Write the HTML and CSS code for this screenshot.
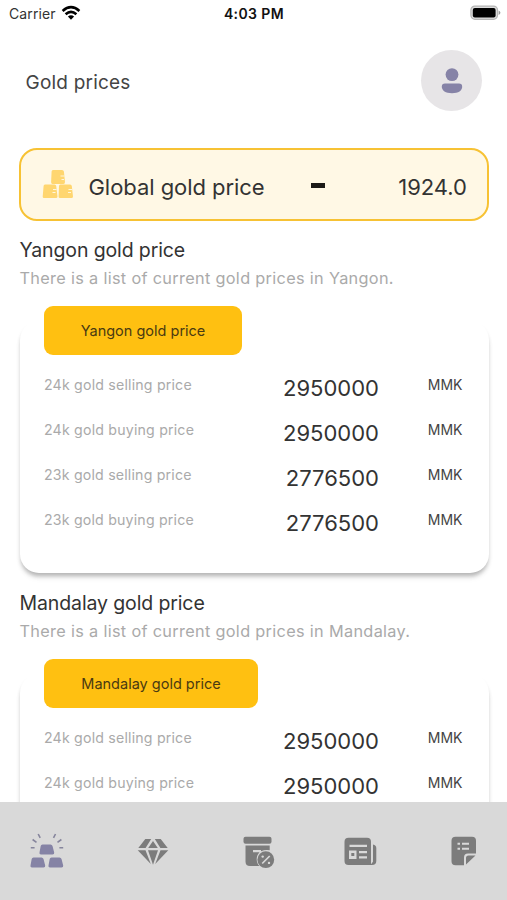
FILE: index.html
```html
<!DOCTYPE html>
<html lang="en">
<head>
<meta charset="utf-8">
<title>Gold prices</title>
<link rel="stylesheet" href="styles.css">
</head>
<body>
<div class="screen">
  <div class="status">
    <div class="carrier"><span>Carrier</span>
      <svg width="20" height="16" viewBox="0 0 20 16"><g fill="none" stroke="#000" stroke-width="2.6"><path d="M1.6 5.900Q10-1.500 18.400 5.900"/><path d="M4.600 9.200Q10 4.400 15.400 9.200"/></g><path d="M6.900 11.500Q10 8.800 13.100 11.500L10 14.800Z"/></svg>
    </div>
    <div class="time">4:03 PM</div>
    <svg class="battery" width="31" height="16" viewBox="0 0 31 16"><rect x=".9" y="1.100" width="26.600" height="13.200" rx="4" fill="#ddd" stroke="#b5b5b5" stroke-width="1.200"/><rect x="2.800" y="3" width="22.800" height="9.400" rx="2"/><path d="M28.600 5.500Q30.400 6.500 30.400 7.700T28.600 10Z" fill="#999"/></svg>
  </div>
  <header class="top">
    <h1>Gold prices</h1>
    <div class="avatar"><svg width="22" height="26" viewBox="0 0 22 26"><circle cx="11" cy="6.600" r="6.400"/><path d="M4 15.600H18Q21.200 15.600 21.200 18.800C21.200 22.500 17.500 25.300 11 25.300S.8 22.500.8 18.800Q.8 15.600 4 15.600Z"/></svg></div>
  </header>
  <div class="global">
    <svg width="32" height="30" viewBox="0 0 32 30"><g fill="#ffd670"><path d="M11 1H20Q21.600 1 21.900 2.500L23 13Q23 15 21.500 15H10.500Q9 15 9.100 13L9.600 2.500Q9.700 1 11 1Z"/><path d="M3 15.500H12.500Q14 15.500 14.200 17L15.500 27.500Q15.500 29 14 29H2Q.6 29 .7 27.500L1.600 17Q1.700 15.500 3 15.500Z"/><path d="M18.300 15.500H28Q29.600 15.500 29.800 17L31 27.500Q31 29 29.500 29H18Q16.500 29 16.600 27.500L17 17Q17.100 15.500 18.300 15.500Z"/></g><path d="M18.500 7H22.500M19.500 10.500H22M11 20.500H14.500M10.500 23.500H13.500M26.500 20.500H30M26 23.500H29" stroke="#fff6dc" stroke-width="1.100"/></svg>
    <span class="name">Global gold price</span>
    <span class="dash"></span>
    <span class="value">1924.0</span>
  </div>
  <main class="list">
    <section>
      <h2>Yangon gold price</h2>
      <p class="sub">There is a list of current gold prices in Yangon.</p>
      <div class="panel">
        <div class="tag"><span>Yangon gold price</span></div>
        <div class="row"><span class="label">24k gold selling price</span><span class="num">2950000</span><span class="unit">MMK</span></div>
        <div class="row"><span class="label">24k gold buying price</span><span class="num">2950000</span><span class="unit">MMK</span></div>
        <div class="row"><span class="label">23k gold selling price</span><span class="num">2776500</span><span class="unit">MMK</span></div>
        <div class="row"><span class="label">23k gold buying price</span><span class="num">2776500</span><span class="unit">MMK</span></div>
      </div>
    </section>
    <section>
      <h2>Mandalay gold price</h2>
      <p class="sub">There is a list of current gold prices in Mandalay.</p>
      <div class="panel">
        <div class="tag wide"><span>Mandalay gold price</span></div>
        <div class="row"><span class="label">24k gold selling price</span><span class="num">2950000</span><span class="unit">MMK</span></div>
        <div class="row"><span class="label">24k gold buying price</span><span class="num">2950000</span><span class="unit">MMK</span></div>
      </div>
    </section>
  </main>
  <nav class="tabs">
    <svg class="active" width="34" height="36" viewBox="0 0 34 36"><path d="M12.500 11.500H20.500Q22 11.500 22.500 13L24.200 19.500Q24.500 21.500 22.500 21.500H11Q9 21.500 9.500 19.500L10.700 13Q11 11.500 12.500 11.500ZM3.500 24.500H11.500Q13 24.500 13.500 26L15.200 32.500Q15.500 34.500 13.500 34.500H2Q0 34.500.5 32.500L1.700 26Q2 24.500 3.500 24.500ZM21.500 24.500H29.500Q31 24.500 31.500 26L33.200 32.500Q33.500 34.500 31.500 34.500H20Q18 34.500 18.500 32.500L19.700 26Q20 24.500 21.500 24.500Z"/><path d="M.8 14.800H4.600M2.600 6.500L6.500 9.300M8.200 1L10.200 4.800M25.500 1L23.500 4.800M31.400 6.500L27.500 9.300M33.200 14.800H29.400" fill="none" stroke="#86859c" stroke-width="1.600"/></svg>
    <svg class="gem" width="32" height="28" viewBox="0 0 32 28"><path d="M8.300 1H14.200L8.600 10H1.300ZM17.800 1H23.700L30.700 10H23.400ZM16 3L20.800 10H11.200ZM.7 12.200H8.500L13.800 26ZM11 12.200H21L16 26.800ZM23.500 12.200H31.300L18.200 26Z"/></svg>
    <svg class="sale" width="32" height="33" viewBox="0 0 32 33"><rect x=".5" y=".8" width="28" height="7" rx="2"/><path d="M2.500 9.500H26.700V14.300Q22.500 13.300 18 15.300V14H10V16.200H16.500C12.500 20.500 13 26.500 16.500 30H7Q2.500 30 2.500 25.500Z"/><circle cx="22.800" cy="23.700" r="8.400"/><path d="M19.200 27.500L26.700 20" fill="none" stroke="#d9d9d9" stroke-width="1.700"/><g fill="#d9d9d9"><circle cx="19.700" cy="20.600" r="1.200"/><circle cx="26" cy="26.900" r="1.200"/></g></svg>
    <svg class="news" width="33" height="29" viewBox="0 0 33 29"><path fill-rule="evenodd" d="M4.500.8H23Q27 .8 27 4.800V28H4.500Q.5 28 .5 24V4.800Q.5 .8 4.500.8ZM5.500 7.700V10H23V7.700ZM5 13.500V22H12.500V13.500ZM15 14V16.300H23V14ZM15 19.200V21.500H23V19.200Z"/><rect x="7.300" y="16" width="3" height="3"/><path d="M29 7.500Q32.300 8 32.300 11V24Q32.300 28 28 28H24Q29 27.500 29 23Z"/><path d="M28 6V25" stroke="#d9d9d9" stroke-width="1.600"/></svg>
    <svg width="26" height="30" viewBox="0 0 26 30"><path d="M4.500.8H21Q25 .8 25 4.800V17.500H17Q13 17.500 13 21.500V29.300H4.500Q.5 29.300 .5 25.300V4.800Q.5.800 4.500.8ZM15 28.500V22Q15 19.500 17.500 19.500H24.500Z"/><path d="M6.500 7.700H9M11 7.700H18M6.500 12.700H9M11 12.700H18" stroke="#d9d9d9" stroke-width="1.900"/></svg>
  </nav>
</div>
</body>
</html>
```
FILE: styles.css
```css
* { box-sizing: border-box; margin: 0; }
body { background: #fff; font-family: Inter, sans-serif; color: #333; }
svg { display: block; flex: none; }
h1, h2 { font-weight: 400; }
.screen { width: 507px; height: 900px; display: flex; flex-direction: column; overflow: hidden; white-space: nowrap; }
.status { height: 28px; padding: 0 6px 2px 9px; display: grid; grid-template-columns: 1fr auto 1fr; align-items: center; flex: none; }
.carrier { display: flex; align-items: center; gap: 5px; font-size: 14px; letter-spacing: .1px; }
.carrier svg { margin-top: -1px; }
.time { font-size: 14px; font-weight: 600; color: #111; letter-spacing: .4px; margin-right: 2px; }
.battery { justify-self: end; }
.top { height: 105px; padding: 0 25px; display: flex; align-items: center; justify-content: space-between; flex: none; }
h1 { font-size: 19px; letter-spacing: .2px; color: #444; margin: 3px 0 0 .5px; }
.avatar { width: 61px; height: 61px; border-radius: 50%; background: #e7e5e7; display: grid; place-items: center; }
.avatar svg { fill: #8683a7; }
.global { margin: 15px 18px 0 19px; height: 73px; border: 2px solid #f7c234; border-radius: 18px; background: #fff8e5; display: flex; align-items: center; padding: 5px 20px 0 21px; flex: none; }
.global svg { margin-top: -7px; }
.name { margin-left: 14.500px; font-size: 22px; letter-spacing: -.05px; width: 222.500px; }
.dash { width: 14px; height: 5px; background: #1c1a16; margin-top: -3px; }
.value { font-size: 22px; margin-left: auto; }
.list { flex: 1; min-height: 0; overflow: hidden; padding: 0 18.500px 0 19.500px; }
section { height: 353px; padding-top: 17px; }
h2 { font-size: 19.500px; line-height: 24px; letter-spacing: -.12px; }
.sub { font-size: 16.300px; line-height: 20px; margin-top: 6px; letter-spacing: .32px; color: #aaa; }
.panel { height: 252px; margin-top: 33px; border-radius: 19px; padding: 0 26px 0 24.500px; box-shadow: 0 4px 4px -1px rgba(0,0,0,.26), 0 6px 6px -1px rgba(0,0,0,.06); }
.tag { width: 198px; height: 49px; border-radius: 9px; background: #ffc011; display: flex; align-items: center; justify-content: center; font-size: 14.500px; position: relative; top: -15px; margin-bottom: -7px; color: #4a3a12; }
.tag.wide { width: 214px; }
.row { height: 45.150px; display: grid; grid-template-columns: 190px 145px 1fr; align-items: center; }
.label { font-size: 14.200px; color: #aaa; letter-spacing: .18px; padding-bottom: 2px; }
.num { font-size: 22px; text-align: right; padding-top: 4px; }
.unit { font-size: 14px; text-align: right; padding-bottom: 2px; color: #444; }
.tabs { height: 98px; flex: none; background: #d9d9d9; display: flex; align-items: center; justify-content: space-between; padding: 0 30px; fill: #7c7c7c; }
.tabs .active { fill: #8583a5; }
.tabs .gem { margin-top: 1px; }
.tabs .sale { margin: 2px -2px 0 2px; }
.tabs .news { margin: 0 2px 0 -2px; }
```
